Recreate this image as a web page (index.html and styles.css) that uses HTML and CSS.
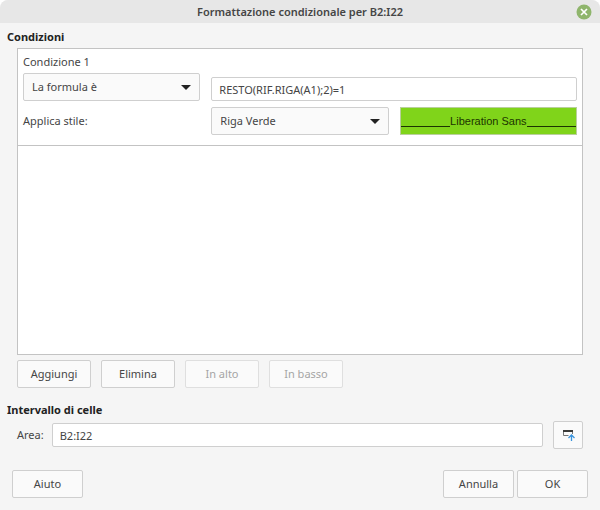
FILE: index.html
```html
<!DOCTYPE html>
<html lang="it">
<head>
    <meta charset="UTF-8">
    <meta name="viewport" content="width=device-width, initial-scale=1.0">
    <title>Formattazione condizionale per B2:I22</title>
    <link rel="stylesheet" href="styles.css">
</head>
<body>
    <div class="dialog">
        <header class="titlebar">
            <h1>Formattazione condizionale per B2:I22</h1>
            <button class="close" type="button" aria-label="Chiudi">
                <svg width="16" height="16" viewBox="0 0 16 16">
                    <circle cx="8" cy="8" r="7.5" fill="#8fb56c"/>
                    <path d="M5 5l6 6M11 5l-6 6" stroke="#fff" stroke-width="1.7" fill="none"/>
                </svg>
            </button>
        </header>

        <form class="content">
            <section>
                <h2>Condizioni</h2>
                <div class="list">
                    <div class="entry">
                        <label class="entry-title" for="type">Condizione 1</label>
                        <select id="type">
                            <option>La formula è</option>
                        </select>
                        <input class="formula" type="text" aria-label="Formula" value="RESTO(RIF.RIGA(A1);2)=1">
                        <label for="style">Applica stile:</label>
                        <select id="style">
                            <option>Riga Verde</option>
                        </select>
                        <div class="preview">Liberation Sans</div>
                    </div>
                </div>
                <div class="actions">
                    <button class="btn" type="button">Aggiungi</button>
                    <button class="btn" type="button">Elimina</button>
                    <button class="btn" type="button" disabled>In alto</button>
                    <button class="btn" type="button" disabled>In basso</button>
                </div>
            </section>

            <section>
                <h2>Intervallo di celle</h2>
                <div class="range">
                    <label for="area">Area:</label>
                    <input id="area" type="text" value="B2:I22">
                    <button class="btn shrink" type="button" aria-label="Riduci">
                        <svg width="14" height="14" viewBox="0 0 14 14">
                            <path d="M2.5 4v3.5h5M11.5 4v2" stroke="#777" fill="none"/>
                            <path d="M2 2h10v2H2z" fill="#3a3a38"/>
                            <path d="M10.500 13V7M7.500 10l3-3 3 3" stroke="#3a94dd" stroke-width="1.3" fill="none"/>
                        </svg>
                    </button>
                </div>
            </section>

            <footer class="footer">
                <button class="btn help" type="button">Aiuto</button>
                <button class="btn" type="button">Annulla</button>
                <button class="btn" type="submit">OK</button>
            </footer>
        </form>
    </div>
</body>
</html>
```
FILE: styles.css
```css
* {
    box-sizing: border-box;
}
body {
    margin: 0;
    background: #fff;
    color: #454545;
    font: 11px/16px "Noto Sans", sans-serif;
}
.dialog {
    display: flex;
    flex-direction: column;
    min-height: 100vh;
    background: #f5f5f5;
    border-radius: 8px 8px 0 0;
}
h1, h2 {
    margin: 0;
    font-size: 11px;
    font-weight: 600;
}
h2 {
    color: #222;
    font-weight: 700;
}

/* Title bar */
.titlebar {
    display: grid;
    grid-template-columns: 16px 1fr 16px;
    align-items: center;
    height: 23px;
    padding: 0 8px;
    background: #e7e7e7;
    border-radius: 8px 8px 0 0;
}
.titlebar h1 {
    grid-column: 2;
    text-align: center;
}
.close {
    height: 16px;
    padding: 0;
    border: none;
    background: none;
}
.close svg {
    display: block;
}

.content {
    display: flex;
    flex: 1;
    flex-direction: column;
    padding: 6px 12px 12px 7px;
}

/* Controls */
input, select, .btn {
    min-width: 0;
    border: 1px solid #cfcfcf;
    border-radius: 2px;
    color: inherit;
    font: inherit;
}
input {
    height: 24px;
    padding: 0 7px;
    background: #fff;
}
select {
    height: 28px;
    padding: 0 24px 0 8px;
    appearance: none;
    background: #fafafa url("data:image/svg+xml,%3Csvg xmlns='http://www.w3.org/2000/svg' width='10' height='5'%3E%3Cpath d='M0 0h10L5 5z' fill='%23222'/%3E%3C/svg%3E") no-repeat right 8px center;
}
.btn {
    width: 74px;
    height: 28px;
    padding: 0;
    background: #fafafa;
}
.btn:disabled {
    border-color: #dfdfdf;
    color: #a5a5a5;
}

/* Conditions */
.list {
    height: 307px;
    margin: 3px 5px 0 10px;
    border: 1px solid #c3c3c3;
    background: #fff;
}
.entry {
    display: grid;
    grid-template-columns: repeat(3, 1fr);
    align-items: center;
    gap: 6px 11px;
    padding: 5px;
    padding-bottom: 10px;
    border-bottom: 1px solid #c3c3c3;
}
.entry-title {
    grid-column: 1 / -1;
    margin-bottom: -3px;
}
.formula {
    grid-column: span 2;
    align-self: end;
}
.preview {
    display: flex;
    height: 28px;
    align-items: center;
    border: 1px solid #b9cf9c;
    background: #80d41a;
    color: #1c3500;
    font-family: "Liberation Sans", sans-serif;
}
.preview::before, .preview::after {
    content: "";
    flex: 1;
    height: 10px;
    border-bottom: 1px solid #1c3500;
}
.actions {
    display: flex;
    gap: 10px;
    margin: 5px 0 14px 10px;
}

/* Cell range */
.range {
    display: flex;
    align-items: center;
    gap: 10px;
    margin: 3px 5px 0 10px;
}
.range label {
    margin-right: -2px;
}
.range input {
    flex: 1;
}
.range .shrink {
    display: flex;
    align-items: center;
    justify-content: center;
    width: 30px;
}

.footer {
    display: flex;
    gap: 3px;
    margin-top: auto;
    padding-left: 5px;
}
.footer .btn {
    width: 71px;
}
.footer .help {
    margin-right: auto;
}
```
